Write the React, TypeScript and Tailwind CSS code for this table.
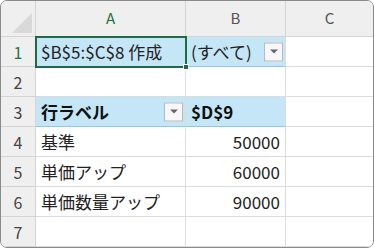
const font = { fontFamily: '"Noto Sans CJK JP", "Noto Sans", sans-serif' };

type Cell = { text?: string; bold?: boolean; right?: boolean; blue?: boolean; dropdown?: boolean; blueLine?: boolean };

const rows: Cell[][] = [
  [{ text: '$B$5:$C$8 作成', blue: true }, { text: '(すべて)', blue: true, dropdown: true, blueLine: true }, {}],
  [{}, {}, {}],
  [{ text: '行ラベル', bold: true, blue: true, dropdown: true, blueLine: true }, { text: '$D$9', bold: true, blue: true, blueLine: true }, {}],
  [{ text: '基準' }, { text: '50000', right: true }, {}],
  [{ text: '単価アップ' }, { text: '60000', right: true }, {}],
  [{ text: '単価数量アップ' }, { text: '90000', right: true }, {}],
  [{}, {}, {}],
];

const FilterButton = () => (
  <span className="absolute right-[2px] top-1/2 -translate-y-1/2 w-[19px] h-[19px] border border-[#b9b9b9] bg-[#f7f7f7] flex items-center justify-center">
    <span className="w-0 h-0 border-l-[4px] border-r-[4px] border-t-[4px] border-l-transparent border-r-transparent border-t-[#666]" />
  </span>
);

export default function App() {
  return (
    <div className="w-[374px] h-[248px] bg-white">
      <div
        className="relative w-[374px] h-[248px] border border-[#8a8a8a] rounded-[7px] overflow-hidden grid grid-cols-[35px_150px_100px_1fr] grid-rows-[36px_repeat(7,30px)] text-[#222]"
        style={font}
      >
        {/* column headings */}
        <div className="relative bg-[#efefef] border-r border-b border-[#d4d4d4]">
          <span className="absolute right-[3px] bottom-[3px] w-0 h-0 border-solid border-b-[20px] border-l-[20px] border-b-[#d9d9d9] border-l-transparent" />
        </div>
        <div className="bg-[#efefef] border-r border-b border-[#d4d4d4] flex items-center justify-center text-[15px] text-[#217346]">A</div>
        <div className="bg-[#efefef] border-r border-b border-[#d4d4d4] flex items-center justify-center text-[15px] text-[#555]">B</div>
        <div className="bg-[#efefef] border-b border-[#d4d4d4] flex items-center justify-center text-[15px] text-[#555]">C</div>

        {rows.map((row, r) => (
          <div key={r} className="contents">
            <div
              className={`bg-[#efefef] border-r border-b border-[#d4d4d4] flex items-center justify-center text-[16px] ${r === 0 ? 'text-[#217346]' : 'text-[#444]'}`}
            >
              {r + 1}
            </div>
            {row.map((c, i) => (
              <div
                key={i}
                className={`relative flex items-center px-[5px] text-[17px] whitespace-nowrap border-b ${i < 2 ? 'border-r' : ''} ${c.blue ? 'bg-[#c5e6f6]' : 'bg-white'} ${c.blueLine ? 'border-b-[#8fc8e8]' : 'border-b-[#dcdcdc]'} border-r-[#dcdcdc] ${c.right ? 'justify-end' : ''} ${c.bold ? 'font-bold text-[#111]' : ''}`}
              >
                {c.text}
                {c.dropdown && <FilterButton />}
              </div>
            ))}
          </div>
        ))}

        {/* active cell A1 */}
        <div className="absolute left-[34px] top-[35px] w-[152px] h-[32px] border-2 border-[#1f6a44] pointer-events-none">
          <span className="absolute -right-[4px] -bottom-[4px] w-[6px] h-[6px] bg-[#1f6a44] border border-white" />
        </div>
      </div>
    </div>
  );
}
